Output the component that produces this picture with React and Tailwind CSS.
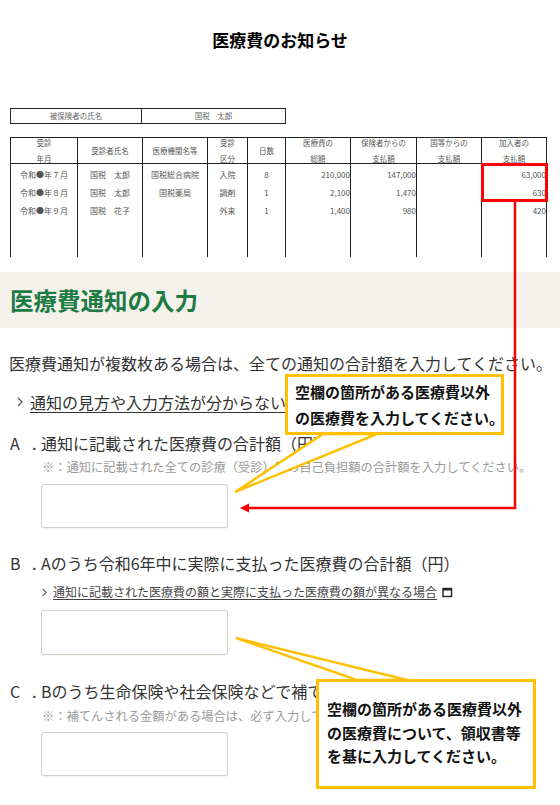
import React from "react";

const COLS = [
  { w: "w-[67px]", head: ["受診", "年月"], cells: ["令和●年７月", "令和●年８月", "令和●年９月"], right: false },
  { w: "w-[65px]", head: ["受診者氏名"], cells: ["国税　太郎", "国税　太郎", "国税　花子"], right: false },
  { w: "w-[65px]", head: ["医療機関名等"], cells: ["国税総合病院", "国税薬局", ""], right: false },
  { w: "w-[40px]", head: ["受診", "区分"], cells: ["入院", "調剤", "外来"], right: false },
  { w: "w-[38px]", head: ["日数"], cells: ["8", "1", "1"], right: false },
  { w: "w-[65px]", head: ["医療費の", "総額"], cells: ["210,000", "2,100", "1,400"], right: true },
  { w: "w-[66px]", head: ["保険者からの", "支払額"], cells: ["147,000", "1,470", "980"], right: true },
  { w: "w-[65px]", head: ["国等からの", "支払額"], cells: ["", "", ""], right: true },
  { w: "w-[66px]", head: ["加入者の", "支払額"], cells: ["63,000", "630", "420"], right: true },
];

const Chevron = ({ className }) => (
  <svg viewBox="0 0 6 10" className={className} fill="none" stroke="#555" strokeWidth="1.3">
    <polyline points="1,1 5,5 1,9" />
  </svg>
);

// 別ウィンドウで開くアイコン
const WindowIcon = () => (
  <svg viewBox="0 0 11 11" className="ml-[5px] h-[11px] w-[11px]" fill="none" stroke="#222">
    <rect x="1" y="1.5" width="8.5" height="8" strokeWidth="1.4" />
    <line x1="1" y1="2.5" x2="9.5" y2="2.5" strokeWidth="2" />
  </svg>
);

const Label = ({ mark, children, className = "" }) => (
  <div className={`flex h-[24px] items-center whitespace-nowrap pl-[10px] text-[16px] leading-[24px] text-[#333] ${className}`}>
    <span className="w-[22px]">{mark}</span>
    <span className="w-[9px]">.</span>
    <span>{children}</span>
  </div>
);

const Note = ({ children, className = "" }) => (
  <p className={`whitespace-nowrap pl-[42px] text-[12.25px] leading-[18px] text-[#9a9a9a] ${className}`}>{children}</p>
);

const Field = ({ className = "" }) => (
  <div className={`ml-[41px] h-[44px] w-[187px] rounded-[3px] border border-[#d6d0c5] bg-white shadow-[0_1px_1px_rgba(0,0,0,0.06)] ${className}`} />
);

export default function App() {
  return (
    <div className="relative h-[805px] w-[560px] overflow-hidden bg-white font-['Noto_Sans_CJK_JP','Noto_Sans',sans-serif]">
      {/* ===== 医療費のお知らせ（書類） ===== */}
      <div className="h-[272px]">
        <h1 className="pt-[30px] text-center text-[17px] font-bold leading-[20px] text-black">医療費のお知らせ</h1>

        <div className="ml-[10px] mt-[58px] flex h-[16px] w-[276px] border border-[#222] text-[7.5px] leading-[14px] text-[#666]">
          <div className="w-[131px] border-r border-[#222] text-center">被保険者の氏名</div>
          <div className="flex-1 text-center">国税　太郎</div>
        </div>

        <div className="ml-[10px] mt-[13px] flex w-[537px] border-t border-[#222] text-[7.5px] text-[#555]">
          {COLS.map((c, i) => (
            <div key={i} className={`${c.w} border-l border-[#222] ${i === COLS.length - 1 ? "border-r" : ""}`}>
              <div className="flex h-[26px] flex-col items-center justify-center border-b border-[#222] leading-[16px]">
                {c.head.map((h) => (
                  <span key={h} className="whitespace-nowrap">{h}</span>
                ))}
              </div>
              <div className="h-[93px] pt-[2px]">
                {c.cells.map((v, j) => (
                  <div key={j} className={`h-[18px] whitespace-nowrap text-[8px] leading-[18px] ${c.right ? "text-right" : "text-center"}`}>
                    {v}
                  </div>
                ))}
              </div>
            </div>
          ))}
        </div>
      </div>

      {/* ===== 医療費通知の入力 ===== */}
      <div className="flex h-[56px] items-center bg-[#f5f2eb] px-[10px]">
        <h2 className="text-[23.5px] font-bold leading-[30px] text-[#1d7b46]">医療費通知の入力</h2>
      </div>

      <p className="mt-[23px] whitespace-nowrap pl-[9px] text-[16px] leading-[24px] text-[#333]">
        医療費通知が複数枚ある場合は、全ての通知の合計額を入力してください。
      </p>

      <div className="mt-[15px] flex h-[24px] items-center pl-[17px]">
        <Chevron className="h-[10px] w-[6px]" />
        <a className="ml-[7px] whitespace-nowrap text-[16px] leading-[24px] text-[#333] underline underline-offset-[3px]">
          通知の見方や入力方法が分からない場合
        </a>
      </div>

      <Label mark="A" className="mt-[17px]">通知に記載された医療費の合計額（円）</Label>
      <Note className="mt-[3px]">※：通知に記載された全ての診療（受診）等の自己負担額の合計額を入力してください。</Note>
      <Field className="mt-[8px]" />

      <Label mark="B" className="mt-[23px]">Aのうち令和6年中に実際に支払った医療費の合計額（円）</Label>
      <div className="mt-[8px] flex h-[18px] items-center pl-[42px]">
        <Chevron className="h-[9px] w-[5px]" />
        <a className="ml-[6px] whitespace-nowrap text-[12px] leading-[18px] text-[#444] underline underline-offset-[2px]">
          通知に記載された医療費の額と実際に支払った医療費の額が異なる場合
        </a>
        <WindowIcon />
      </div>
      <Field className="mt-[9px] h-[45px]" />

      <Label mark="C" className="mt-[24px]">Bのうち生命保険や社会保険などで補てんされる金額（円）</Label>
      <Note className="mt-[4px]">※：補てんされる金額がある場合は、必ず入力してください。</Note>
      <Field className="mt-[7px]" />

      {/* ===== 注釈（赤枠・矢印・吹き出し） ===== */}
      <svg className="pointer-events-none absolute left-0 top-0 h-[805px] w-[560px]" viewBox="0 0 560 805">
        <rect x="482.5" y="164.5" width="64" height="36" fill="none" stroke="#ff0000" strokeWidth="3" />
        <polyline points="515,202 515,508 247,508" fill="none" stroke="#ff0000" strokeWidth="2.5" />
        <polygon points="240,508 249,503.5 249,512.5" fill="#ff0000" />
        <polygon points="323,434 377,434 235,492" fill="#fff" stroke="#ffc000" strokeWidth="2.5" strokeLinejoin="miter" />
        <polygon points="357,680 407,680 236,638" fill="#fff" stroke="#ffc000" strokeWidth="2.5" strokeLinejoin="miter" />
      </svg>

      <div className="absolute left-[285px] top-[374px] h-[61px] w-[219px] whitespace-nowrap border-[3px] border-[#ffc000] bg-white pl-[7px] pt-[2px] text-[15px] font-bold leading-[26px] text-[#111]">
        空欄の箇所がある医療費以外
        <br />
        の医療費を入力してください。
      </div>

      <div className="absolute left-[316px] top-[679px] h-[110px] w-[220px] whitespace-nowrap border-[3px] border-[#ffc000] bg-white pl-[8px] pt-[15px] text-[15px] font-bold leading-[23.5px] text-[#111]">
        空欄の箇所がある医療費以外
        <br />
        の医療費について、領収書等
        <br />
        を基に入力してください。
      </div>
    </div>
  );
}
